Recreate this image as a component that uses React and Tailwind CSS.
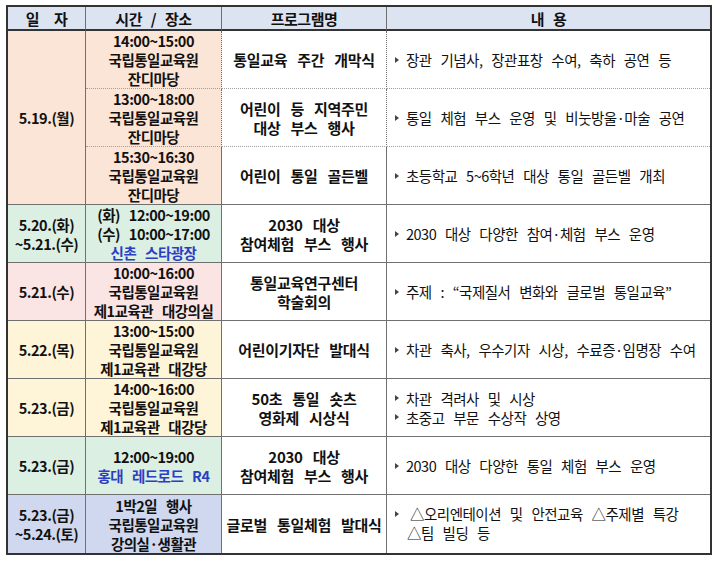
import React from 'react';

const Cell = ({ bg = 'bg-white', className = '', children }) => (
  <div
    className={`${bg} flex flex-col items-center justify-center text-center border-r border-b border-[#707070] font-bold ${className}`}
  >
    {children}
  </div>
);

const Bullet = () => (
  <span className="inline-block w-0 h-0 border-l-[4px] border-l-[#444] border-y-[3px] border-y-transparent shrink-0" />
);

const Desc = ({ lines, dotted }) => (
  <div
    className={`bg-white flex flex-col justify-center items-start pl-[8px] border-b [word-spacing:6px] text-[14.5px] ${
      dotted ? 'border-dotted border-[#a0a0a0]' : 'border-[#707070]'
    }`}
  >
    {lines.map((l) => (
      <div key={l} className="flex items-center gap-[7px] whitespace-nowrap">
        <Bullet />
        <span>{l}</span>
      </div>
    ))}
  </div>
);

const Time = ({ lines, blue }) => (
  <>
    {lines.map((l) => (
      <span key={l} className="whitespace-nowrap">
        {l}
      </span>
    ))}
    {blue && <span className="text-[#2a3fc4] whitespace-nowrap">{blue}</span>}
  </>
);

const App = () => {
  const dot = 'border-b-[#a0a0a0] border-dotted';
  const prog = '[word-spacing:7px] tracking-[-0.3px] text-[15px]';
  return (
    <div className="w-[719px] h-[561px] bg-white pt-[5px] pl-[6px] font-['Noto_Sans_CJK_KR','Noto_Sans',sans-serif] text-[14.5px] leading-[19px] tracking-[-0.5px] [word-spacing:6px] text-[#111]">
      <div className="w-[706px] border-2 border-[#333] grid grid-cols-[78px_136px_165px_1fr] grid-rows-[24px_repeat(9,58px)] overflow-hidden">
        {/* header */}
        <Cell bg="bg-[#dde4f1]" className="border-b-2 border-b-[#333] text-[15px] [word-spacing:12px]">일 자</Cell>
        <Cell bg="bg-[#dde4f1]" className="border-b-2 border-b-[#333] text-[15px]">시간 / 장소</Cell>
        <Cell bg="bg-[#dde4f1]" className="border-b-2 border-b-[#333] text-[15px]">프로그램명</Cell>
        <div className="bg-[#dde4f1] flex items-center justify-center font-bold text-[15px] border-b-2 border-b-[#333]">
          내 용
        </div>

        {/* 5.19 */}
        <Cell bg="bg-[#fbe5d6]" className="row-span-3">5.19.(월)</Cell>
        <Cell bg="bg-[#fbe5d6]" className={dot}>
          <Time lines={['14:00~15:00', '국립통일교육원', '잔디마당']} />
        </Cell>
        <Cell className={`${dot} ${prog}`}>통일교육 주간 개막식</Cell>
        <Desc dotted lines={['장관 기념사, 장관표창 수여, 축하 공연 등']} />

        <Cell bg="bg-[#fbe5d6]" className={dot}>
          <Time lines={['13:00~18:00', '국립통일교육원', '잔디마당']} />
        </Cell>
        <Cell className={`${dot} ${prog}`}>
          <span>어린이 등 지역주민</span>
          <span>대상 부스 행사</span>
        </Cell>
        <Desc dotted lines={['통일 체험 부스 운영 및 비눗방울·마술 공연']} />

        <Cell bg="bg-[#fbe5d6]">
          <Time lines={['15:30~16:30', '국립통일교육원', '잔디마당']} />
        </Cell>
        <Cell className={prog}>어린이 통일 골든벨</Cell>
        <Desc lines={['초등학교 5~6학년 대상 통일 골든벨 개최']} />

        {/* 5.20 */}
        <Cell bg="bg-[#dcefe3]">
          <span>5.20.(화)</span>
          <span>~5.21.(수)</span>
        </Cell>
        <Cell bg="bg-[#dcefe3]">
          <Time lines={['(화) 12:00~19:00', '(수) 10:00~17:00']} blue="신촌 스타광장" />
        </Cell>
        <Cell className={prog}>
          <span>2030 대상</span>
          <span>참여체험 부스 행사</span>
        </Cell>
        <Desc lines={['2030 대상 다양한 참여·체험 부스 운영']} />

        {/* 5.21 */}
        <Cell bg="bg-[#fbe4e4]">5.21.(수)</Cell>
        <Cell bg="bg-[#fbe4e4]">
          <Time lines={['10:00~16:00', '국립통일교육원', '제1교육관 대강의실']} />
        </Cell>
        <Cell className={prog}>
          <span>통일교육연구센터</span>
          <span>학술회의</span>
        </Cell>
        <Desc lines={['주제 : “국제질서 변화와 글로벌 통일교육”']} />

        {/* 5.22 */}
        <Cell bg="bg-[#fef4d8]">5.22.(목)</Cell>
        <Cell bg="bg-[#fef4d8]">
          <Time lines={['13:00~15:00', '국립통일교육원', '제1교육관 대강당']} />
        </Cell>
        <Cell className={prog}>어린이기자단 발대식</Cell>
        <Desc lines={['차관 축사, 우수기자 시상, 수료증·임명장 수여']} />

        {/* 5.23 */}
        <Cell bg="bg-[#fef4d8]">5.23.(금)</Cell>
        <Cell bg="bg-[#fef4d8]">
          <Time lines={['14:00~16:00', '국립통일교육원', '제1교육관 대강당']} />
        </Cell>
        <Cell className={prog}>
          <span>50초 통일 숏츠</span>
          <span>영화제 시상식</span>
        </Cell>
        <Desc lines={['차관 격려사 및 시상', '초중고 부문 수상작 상영']} />

        {/* 5.23 green */}
        <Cell bg="bg-[#dcefe3]">5.23.(금)</Cell>
        <Cell bg="bg-[#dcefe3]">
          <Time lines={['12:00~19:00']} blue="홍대 레드로드 R4" />
        </Cell>
        <Cell className={prog}>
          <span>2030 대상</span>
          <span>참여체험 부스 행사</span>
        </Cell>
        <Desc lines={['2030 대상 다양한 통일 체험 부스 운영']} />

        {/* 5.23 ~ 5.24 */}
        <Cell bg="bg-[#cfd8ee]" className="border-b-0">
          <span>5.23.(금)</span>
          <span>~5.24.(토)</span>
        </Cell>
        <Cell bg="bg-[#cfd8ee]" className="border-b-0">
          <Time lines={['1박2일 행사', '국립통일교육원', '강의실·생활관']} />
        </Cell>
        <Cell className={`border-b-0 ${prog}`}>글로벌 통일체험 발대식</Cell>
        <div className="bg-white flex items-start pl-[8px] pt-[9px] text-[14.5px] [word-spacing:6px]">
          <div className="flex items-center h-[19px]">
            <Bullet />
          </div>
          <div className="ml-[11px] whitespace-nowrap">
            <div>△오리엔테이션 및 안전교육 △주제별 특강</div>
            <div className="-ml-[3px]">△팀 빌딩 등</div>
          </div>
        </div>
      </div>
    </div>
  );
};

export default App;
